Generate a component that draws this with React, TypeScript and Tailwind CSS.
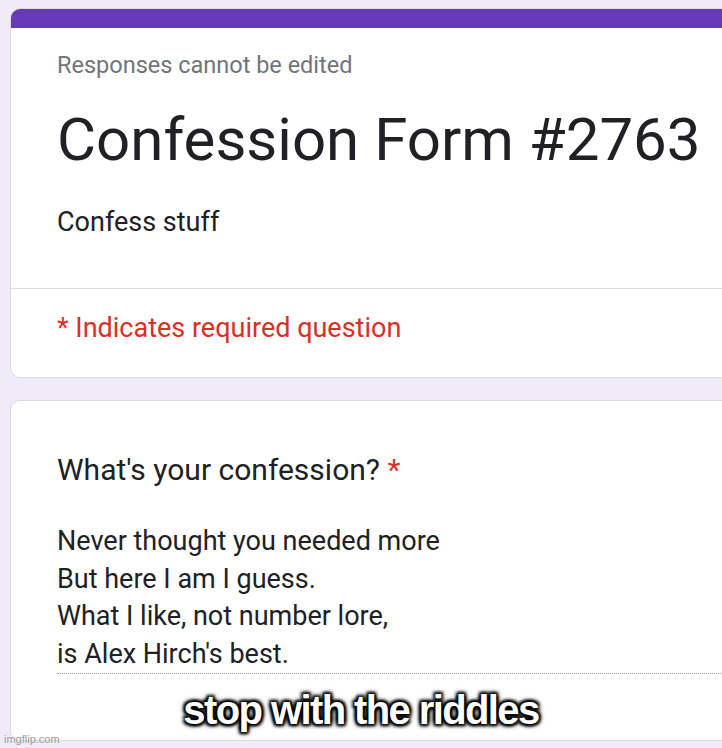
import React from "react";

const poem = [
  "Never thought you needed more",
  "But here I am I guess.",
  "What I like, not number lore,",
  "is Alex Hirch's best.",
];

const App: React.FC = () => {
  return (
    <div
      className="relative w-[722px] h-[748px] overflow-hidden bg-[#f0ebf8] pl-[10px] pt-[8px]"
      style={{ fontFamily: "Roboto, 'Liberation Sans', sans-serif" }}
    >
      {/* header card */}
      <div className="w-[760px] rounded-[10px] bg-white border border-[#dadce0] overflow-hidden">
        <div className="h-[19px] bg-[#673ab7]" />
        <div className="pl-[46px] pt-[23px] pb-[50px]">
          <p className="text-[23.5px] leading-[28px] text-[#70757a]">Responses cannot be edited</p>
          <h1 className="mt-[26px] text-[60px] leading-[70px] text-[#202124] whitespace-nowrap">
            Confession Form #2763
          </h1>
          <p className="mt-[31px] text-[27px] leading-[32px] text-[#202124]">Confess stuff</p>
        </div>
        <div className="border-t border-[#dadce0] pl-[46px] pt-[23px] pb-[33px]">
          <p className="text-[27px] leading-[32px] text-[#d93025]">* Indicates required question</p>
        </div>
      </div>

      {/* question card */}
      <div className="mt-[22px] w-[760px] h-[341px] rounded-[10px] bg-white border border-[#dadce0] pl-[46px] pt-[53px]">
        <p className="text-[30px] leading-[32px] text-[#202124]">
          What's your confession? <span className="text-[#d93025]">*</span>
        </p>
        <div className="mt-[37px] text-[27px] leading-[37.5px] text-[#202124]">
          {poem.map((line) => (
            <p key={line}>{line}</p>
          ))}
        </div>
        <div className="mt-[0px] border-b border-dotted border-[#9aa0a6]" />
      </div>

      {/* meme caption */}
      <div
        className="absolute left-0 right-0 top-[690px] text-center text-white text-[40px] leading-[40px] font-bold tracking-[-1.6px]"
        style={{
          fontFamily: "'Liberation Sans', Arial, sans-serif",
          textShadow:
            "2px 2px 3px #000, -2px -2px 3px #000, 2px -2px 3px #000, -2px 2px 3px #000, 0 0 6px #000",
        }}
      >
        stop with the riddles
      </div>
      <div
        className="absolute left-[4px] top-[732px] text-[11px] leading-[14px] text-[#9a9a9a]"
        style={{ fontFamily: "'Liberation Sans', Arial, sans-serif" }}
      >
        imgflip.com
      </div>
    </div>
  );
};

export default App;
